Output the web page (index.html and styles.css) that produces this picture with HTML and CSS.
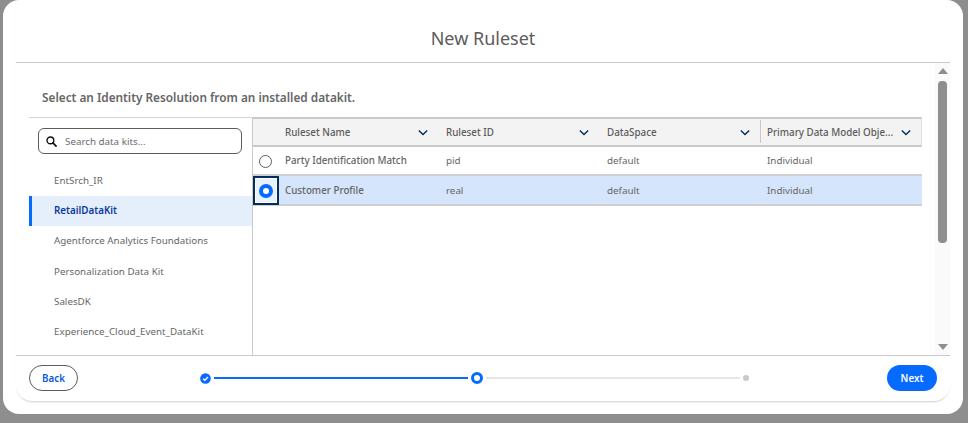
FILE: index.html
```html
<!DOCTYPE html>
<html lang="en">
<head>
<meta charset="utf-8">
<title>New Ruleset</title>
<link rel="stylesheet" href="styles.css">
</head>
<body>
<div class="modal">
  <div class="panel">
    <header class="head"><h1 class="title">New Ruleset</h1></header>
    <div class="middle">
      <main class="content">
        <div class="intro">Select an Identity Resolution from an installed datakit.</div>
        <div class="split">
          <aside class="side">
            <div class="search">
              <svg class="search-icon" viewBox="0 0 14 14" width="11" height="11"><circle cx="5.6" cy="5.6" r="4.3" fill="none" stroke="#111" stroke-width="1.8"/><path d="M8.8 8.8l4 4" stroke="#111" stroke-width="2.2" stroke-linecap="round"/></svg>
              <span class="placeholder">Search data kits...</span>
            </div>
            <ul class="kits">
              <li class="kit">EntSrch_IR</li>
              <li class="kit active">RetailDataKit</li>
              <li class="kit">Agentforce Analytics Foundations</li>
              <li class="kit">Personalization Data Kit</li>
              <li class="kit">SalesDK</li>
              <li class="kit">Experience_Cloud_Event_DataKit</li>
            </ul>
          </aside>
          <section class="table">
            <div class="row header">
              <div class="cell radio-cell"></div>
              <div class="cell name">Ruleset Name<svg class="chev" viewBox="0 0 12 8" width="10" height="7"><path d="M1 1.5l5 5 5-5" fill="none" stroke="#032d60" stroke-width="1.7"/></svg></div>
              <div class="cell id">Ruleset ID<svg class="chev" viewBox="0 0 12 8" width="10" height="7"><path d="M1 1.5l5 5 5-5" fill="none" stroke="#032d60" stroke-width="1.7"/></svg></div>
              <div class="cell space">DataSpace<svg class="chev" viewBox="0 0 12 8" width="10" height="7"><path d="M1 1.5l5 5 5-5" fill="none" stroke="#032d60" stroke-width="1.7"/></svg></div>
              <div class="cell obj divided">Primary Data Model Obje...<svg class="chev" viewBox="0 0 12 8" width="10" height="7"><path d="M1 1.5l5 5 5-5" fill="none" stroke="#032d60" stroke-width="1.7"/></svg></div>
            </div>
            <div class="row body">
              <div class="cell radio-cell"><span class="radio"></span></div>
              <div class="cell name">Party Identification Match</div>
              <div class="cell id">pid</div>
              <div class="cell space">default</div>
              <div class="cell obj">Individual</div>
            </div>
            <div class="row body selected">
              <div class="cell radio-cell focus"><span class="radio on"></span></div>
              <div class="cell name">Customer Profile</div>
              <div class="cell id">real</div>
              <div class="cell space">default</div>
              <div class="cell obj">Individual</div>
            </div>
          </section>
        </div>
      </main>
      <div class="scrollbar">
        <span class="arrow up"></span>
        <span class="thumb"></span>
        <span class="arrow down"></span>
      </div>
    </div>
    <footer class="foot">
      <button class="btn back">Back</button>
      <div class="stepper">
        <svg class="step-check" viewBox="0 0 12 12" width="11" height="11"><circle cx="6" cy="6" r="5.8" fill="#066afe"/><path d="M3.4 6.2l1.9 1.8 3.4-3.6" fill="none" stroke="#fff" stroke-width="1.6"/></svg>
        <span class="line done"></span>
        <span class="ring"></span>
        <span class="line"></span>
        <span class="dot"></span>
      </div>
      <button class="btn next">Next</button>
    </footer>
  </div>
</div>
</body>
</html>
```
FILE: styles.css
```css
* { box-sizing: border-box; }
html, body { margin: 0; height: 423px; overflow: hidden; }
body {
  background: #8e8e8e;
  font-family: "Noto Sans", "Open Sans", sans-serif;
  font-size: 9.8px;
  color: #666;
}
.modal {
  width: 960px;
  height: 414px;
  margin-left: 3px;
  padding: 0 13px 13px;
  background: #fff;
  border-radius: 16px;
}
.panel {
  height: 401px;
  display: flex;
  flex-direction: column;
  border-radius: 0 0 16px 16px;
  box-shadow: 0 2px 2px -1px rgba(0,0,0,.2);
}
.head {
  height: 63px;
  flex: none;
  border-bottom: 1px solid #c9c9c9;
  display: flex;
  justify-content: center;
  padding-top: 26px;
}
.title {
  margin: 0;
  font-size: 18px;
  line-height: 24px;
  font-weight: 400;
  color: #5c5c5c;
}
.middle { flex: 1; display: flex; min-height: 0; }
.content { width: 906px; padding-left: 13px; display: flex; flex-direction: column; flex: none; }
.intro {
  height: 54px;
  flex: none;
  padding: 25px 0 0 13px;
  font-size: 11.8px;
  line-height: 18px;
  font-weight: 600;
  color: #666;
  border-radius: 0 0 6px 6px;
}
.split { flex: 1; display: flex; min-height: 0; }
.side { width: 224px; flex: none; border-right: 1px solid #c9c9c9; border-top: 1px solid #d4d4d4; padding-top: 10px; }
.search {
  width: 204px;
  height: 26px;
  margin-left: 9px;
  border: 1px solid #5c5c5c;
  border-radius: 6px;
  display: flex;
  align-items: center;
  padding-left: 7px;
  gap: 8px;
}
.placeholder { color: #6b6b6b; }
.kits { list-style: none; margin: 11.5px 0 0; padding: 0; }
.kit { height: 30.4px; line-height: 30px; padding-left: 25px; color: #666; }
.kit.active { background: #e5effc; border-left: 3px solid #066afe; padding-left: 22px; color: #0b3a9c; font-weight: 600; }
.table { flex: 1; min-width: 0; }
.row { display: flex; align-items: stretch; }
.cell { display: flex; align-items: center; padding-left: 6px; position: relative; }
.radio-cell { width: 26px; padding-left: 6px; }
.name { width: 161px; }
.id { width: 161px; }
.space { width: 159px; }
.obj { flex: 1; padding-left: 7px; }
.header { height: 30px; background: #f3f3f3; border-top: 2px solid #c9c9c9; border-bottom: 2px solid #c9c9c9; border-right: 1px solid #e0e0e0; font-weight: 500; color: #5c5c5c; }
.header .cell { padding-right: 12px; justify-content: space-between; }
.header .space, .header .obj { padding-right: 10px; }
.header .radio-cell { justify-content: flex-start; }
.divided::before { content: ""; position: absolute; left: 0; top: 1px; bottom: 2px; width: 1px; background: #c9c9c9; }
.body { height: 29px; border-bottom: 2px solid #d0d0d0; }
.body.selected { height: 30px; background: #d5e5fb; }
.body .name { font-weight: 500; }
.focus { border: 2px solid #032d60; background: #e8f1fd; padding-left: 4px; outline: 1px solid #fff; outline-offset: -3px; margin-bottom: -1px; }
.radio { width: 13px; height: 13px; margin-top: 1px; border: 1px solid #5c5c5c; border-radius: 50%; background: #fff; }
.radio.on { width: 14px; height: 14px; margin-top: 0; border: 4px solid #066afe; }
.scrollbar {
  width: 15px;
  margin-left: 13px;
  flex: none;
  background: #fafafa;
  display: flex;
  flex-direction: column;
  align-items: center;
  padding-top: 5px;
}
.arrow { width: 0; height: 0; border-left: 5px solid transparent; border-right: 5px solid transparent; }
.up { border-bottom: 6px solid #8e8e8e; }
.down { border-top: 6px solid #8e8e8e; margin-top: 101px; }
.thumb { width: 9px; height: 162px; margin-top: 7px; background: #8e8e8e; border-radius: 4px; }
.foot {
  height: 46px;
  flex: none;
  border-top: 1px solid #c9c9c9;
  display: flex;
  align-items: center;
  padding: 0 13px 1px;
  position: relative;
}
.btn {
  width: 49px;
  height: 26px;
  border-radius: 13px;
  font: 600 9.8px "Noto Sans", sans-serif;
  padding: 0;
}
.back { background: #fff; border: 1px solid #5c5c5c; color: #0b5cd5; }
.next { width: 50px; background: #066afe; border: 0; color: #fff; margin-left: 138px; }
.stepper { display: flex; align-items: center; margin-left: 122px; }
.line { width: 254px; height: 2px; background: #e5e5e5; }
.line.done { background: #066afe; margin: 0 3px; }
.ring { width: 12px; height: 12px; border: 3px solid #066afe; border-radius: 50%; margin-right: 3px; }
.dot { width: 6px; height: 6px; background: #c9c9c9; border-radius: 50%; margin-left: 3px; }
```
